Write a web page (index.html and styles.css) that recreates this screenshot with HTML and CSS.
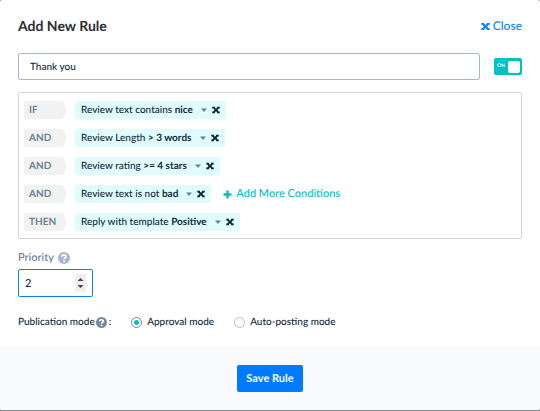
FILE: index.html
```html
<!DOCTYPE html>
<html lang="en">
<head>
    <meta charset="UTF-8">
    <meta name="viewport" content="width=device-width, initial-scale=1.0">
    <title>Add New Rule</title>
    <link rel="stylesheet" href="styles.css">
</head>
<body>
    <svg class="symbols" aria-hidden="true">
        <symbol id="cross" viewBox="0 0 10 10">
            <path d="M0.3 1h3.4v1L5 3.4 6.3 2V1h3.4v2H8.6L6.8 5l1.8 2h1.1v2H6.3V8L5 6.6 3.7 8v1H0.3V7h1.1l1.8-2-1.8-2H0.3z"/>
        </symbol>
        <symbol id="caret" viewBox="0 0 6 4">
            <path d="M0 0.5h6L3 4z"/>
        </symbol>
        <symbol id="plus" viewBox="0 0 9 9">
            <path d="M3.3 0.5h2.4v2.8h2.8v2.4H5.7v2.8H3.3V5.7H0.5V3.3h2.8z"/>
        </symbol>
        <symbol id="question" viewBox="0 0 12 12">
            <circle cx="6" cy="6" r="6"/>
            <path class="mark" d="M4 4.7C4 2.4 8 2.4 8 4.6 8 6 6.1 5.8 6.1 7.3"/>
            <circle class="dot" cx="6.1" cy="9.2" r="1"/>
        </symbol>
    </svg>

    <form class="dialog">
        <div class="content">
            <header>
                <h1>Add New Rule</h1>
                <a class="close" href="#"><svg><use href="#cross"/></svg>Close</a>
            </header>

            <div class="name-row">
                <input class="name" type="text" value="Thank you" aria-label="Rule name">
                <label class="switch">
                    <input type="checkbox" checked aria-label="Rule enabled">
                    <span>ON</span>
                </label>
            </div>

            <div class="conditions">
                <div class="row">
                    <span class="tag">IF</span>
                    <div class="chip">
                        <button type="button">Review text contains <b>nice</b><svg class="caret"><use href="#caret"/></svg></button>
                        <button type="button" aria-label="Remove"><svg class="cross"><use href="#cross"/></svg></button>
                    </div>
                </div>
                <div class="row">
                    <span class="tag">AND</span>
                    <div class="chip">
                        <button type="button">Review Length <b>&gt; 3 words</b><svg class="caret"><use href="#caret"/></svg></button>
                        <button type="button" aria-label="Remove"><svg class="cross"><use href="#cross"/></svg></button>
                    </div>
                </div>
                <div class="row">
                    <span class="tag">AND</span>
                    <div class="chip">
                        <button type="button">Review rating <b>&gt;= 4 stars</b><svg class="caret"><use href="#caret"/></svg></button>
                        <button type="button" aria-label="Remove"><svg class="cross"><use href="#cross"/></svg></button>
                    </div>
                </div>
                <div class="row">
                    <span class="tag">AND</span>
                    <div class="chip">
                        <button type="button">Review text is not <b>bad</b><svg class="caret"><use href="#caret"/></svg></button>
                        <button type="button" aria-label="Remove"><svg class="cross"><use href="#cross"/></svg></button>
                    </div>
                    <a class="add" href="#"><svg><use href="#plus"/></svg>Add More Conditions</a>
                </div>
                <div class="row">
                    <span class="tag">THEN</span>
                    <div class="chip">
                        <button type="button">Reply with template <b>Positive</b><svg class="caret"><use href="#caret"/></svg></button>
                        <button type="button" aria-label="Remove"><svg class="cross"><use href="#cross"/></svg></button>
                    </div>
                </div>
            </div>

            <div class="priority">
                <label for="priority">Priority <svg class="help"><use href="#question"/></svg></label>
                <input id="priority" type="number" value="2">
            </div>

            <div class="mode" role="radiogroup" aria-labelledby="mode-label">
                <span class="mode-label" id="mode-label">Publication mode<svg class="help"><use href="#question"/></svg>:</span>
                <label><input type="radio" name="mode" checked>Approval mode</label>
                <label><input type="radio" name="mode">Auto-posting mode</label>
            </div>
        </div>

        <footer>
            <button class="save" type="submit">Save Rule</button>
        </footer>
    </form>
</body>
</html>
```

FILE: styles.css
```css
* {
    box-sizing: border-box;
    margin: 0;
    padding: 0;
}

body {
    background: #888a8d;
    color: #12293d;
    font: 500 10px/18px Lato, "Liberation Sans", sans-serif;
    text-rendering: geometricPrecision;
}

input, button {
    font: inherit;
    color: inherit;
    text-rendering: inherit;
}

button {
    border: 0;
    background: none;
    cursor: pointer;
}

a {
    text-decoration: none;
}

svg {
    fill: currentColor;
    flex: none;
}

.symbols {
    display: none;
}

.dialog {
    background: #fff;
    border-radius: 2px;
    overflow: hidden;
    margin-bottom: 1px;
}

.content {
    padding: 17px 18px 16px;
}

header {
    display: flex;
    justify-content: space-between;
    align-items: center;
    margin-bottom: 18px;
}

h1 {
    color: #2b2d30;
    font-size: 14px;
    font-weight: 700;
}

.close {
    display: flex;
    align-items: center;
    gap: 3px;
    color: #0a84ff;
    font-size: 12px;
}

.close svg {
    width: 9px;
    height: 9px;
}

.name-row {
    display: flex;
    align-items: center;
    gap: 14px;
    margin-bottom: 12px;
}

.name {
    flex: 1;
    min-width: 0;
    height: 27px;
    padding: 0 11px;
    border: 1px solid #a9b5d0;
    border-radius: 2px;
}

.switch {
    display: flex;
    position: relative;
    width: 28px;
    height: 17px;
    padding-left: 3px;
    border-radius: 2px;
    background: #00c2c2;
    color: #fff;
    font-size: 5px;
    font-weight: 700;
    line-height: 17px;
}

.switch input {
    position: absolute;
    inset: 0;
    opacity: 0;
}

.switch::after {
    content: "";
    width: 12px;
    height: 12px;
    margin: 3px 2px 0 auto;
    border-radius: 2px;
    background: #fff;
}

.conditions {
    display: flex;
    flex-direction: column;
    gap: 10px;
    padding: 8px 5px 7px;
    border: 1px solid #d0d2d4;
    border-radius: 2px;
    margin-bottom: 10px;
}

.row {
    display: flex;
    align-items: center;
}

.tag {
    width: 43px;
    height: 18px;
    margin-right: 8px;
    padding-left: 5px;
    border-radius: 2px;
    background: #f1f2f2;
    clip-path: polygon(0 0, 39px 0, 100% 50%, 39px 100%, 0 100%);
    color: #6b8094;
    font-weight: 700;
}

.chip {
    display: flex;
    align-items: center;
    gap: 5px;
    height: 18px;
    padding: 0 6px;
    border-radius: 2px;
    background: #e0fbfb;
}

.chip button {
    line-height: 18px;
}

.caret {
    width: 6px;
    height: 4px;
    margin-left: 8px;
    vertical-align: 1px;
    color: #6b8094;
}

.cross {
    display: block;
    width: 8px;
    height: 8px;
}

.add {
    display: flex;
    align-items: center;
    gap: 4px;
    margin-left: 12px;
    color: #00c2c2;
    font-size: 11px;
}

.add svg {
    width: 9px;
    height: 9px;
}

.help {
    width: 12px;
    height: 12px;
    color: #a9b5d0;
}

.mark {
    fill: none;
    stroke: #fff;
    stroke-width: 1.8;
}

.dot {
    fill: #fff;
}

.priority {
    display: flex;
    flex-direction: column;
    align-items: flex-start;
    gap: 2px;
    margin-bottom: 16px;
    font-size: 11px;
}

.priority label {
    display: flex;
    align-items: center;
    gap: 4px;
    color: #6b8094;
}

.priority input {
    width: 75px;
    height: 28px;
    padding: 0 6px;
    border: 1px solid #0a84e8;
    border-radius: 2px;
    outline: 0;
}

.priority input::-webkit-inner-spin-button {
    appearance: none;
    width: 11px;
    height: 18px;
    opacity: 1;
    background: #efefef url("data:image/svg+xml,%3Csvg xmlns='http://www.w3.org/2000/svg' viewBox='0 0 11 18'%3E%3Cpath fill='%23444' d='M2.5 7l3-3 3 3zM2.5 11h6l-3 3z'/%3E%3C/svg%3E");
}

.mode {
    display: flex;
    align-items: center;
    gap: 20px;
}

.mode label, .mode-label {
    display: flex;
    align-items: center;
}

.mode .help {
    width: 11px;
    height: 11px;
    margin: 0 2px 0 1px;
    color: #7488a0;
}

.mode input {
    appearance: none;
    width: 11px;
    height: 11px;
    margin-right: 5px;
    border: 1px solid #b4bfd6;
    border-radius: 50%;
}

.mode input:checked {
    border-color: #7488a0;
    background: radial-gradient(#00c2c2 0 2px, #fff 3px);
}

footer {
    display: flex;
    justify-content: center;
    padding: 18px;
    background: #f8fafc;
}

.save {
    height: 27px;
    padding: 0 9px;
    border-radius: 2px;
    background: #007bff;
    color: #fff;
    font-size: 11px;
    font-weight: 700;
}
```
